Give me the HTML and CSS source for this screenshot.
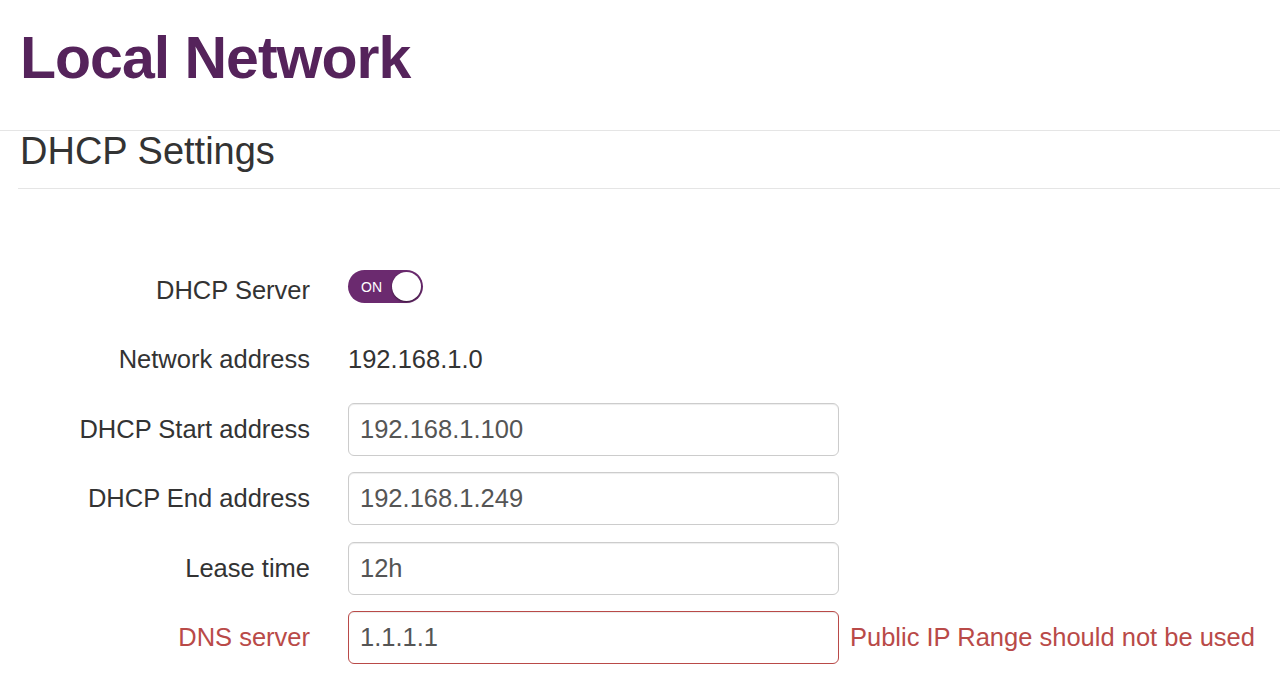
FILE: index.html
```html
<!DOCTYPE html>
<html lang="en">
<head>
  <meta charset="UTF-8" />
  <title>Local Network</title>
  <link rel="stylesheet" href="styles.css">
</head>
<body>
  <h1 class="page-title">Local Network</h1>

  <div class="section">
    <div class="legend">DHCP Settings</div>

    <form class="dhcp-form">
      <div class="form-row">
        <label class="row-label">DHCP Server</label>
        <div class="row-control">
          <span class="toggle">
            <span class="toggle-text">ON</span>
            <span class="toggle-knob"></span>
          </span>
        </div>
      </div>

      <div class="form-row">
        <label class="row-label">Network address</label>
        <div class="row-control static-value">192.168.1.0</div>
      </div>

      <div class="form-row">
        <label class="row-label" for="dhcp-start">DHCP Start address</label>
        <div class="row-control">
          <input type="text" id="dhcp-start" value="192.168.1.100" />
        </div>
      </div>

      <div class="form-row">
        <label class="row-label" for="dhcp-end">DHCP End address</label>
        <div class="row-control">
          <input type="text" id="dhcp-end" value="192.168.1.249" />
        </div>
      </div>

      <div class="form-row">
        <label class="row-label" for="lease">Lease time</label>
        <div class="row-control">
          <input type="text" id="lease" value="12h" />
        </div>
      </div>

      <div class="form-row has-error">
        <label class="row-label" for="dns">DNS server</label>
        <div class="row-control">
          <input type="text" id="dns" value="1.1.1.1" />
        </div>
        <span class="help-text">Public IP Range should not be used</span>
      </div>
    </form>
  </div>
</body>
</html>
```

FILE: styles.css
```css
* {
  box-sizing: border-box;
}
body {
  margin: 0;
  font-family: 'Liberation Sans', Arial, sans-serif;
  color: #333;
  background-color: #fff;
}

.page-title {
  margin: 25px 0 39px;
  padding-left: 20px;
  font-size: 59px;
  line-height: 66px;
  font-weight: bold;
  letter-spacing: -1px;
  color: #55235b;
}

.section {
  border-top: 1px solid #e5e5e5;
}

.legend {
  margin-left: 18px;
  padding: 1px 0 18px 2px;
  font-size: 38px;
  line-height: 38px;
  color: #333;
  border-bottom: 1px solid #e5e5e5;
}

.dhcp-form {
  margin-top: 74.5px;
}

.form-row {
  display: flex;
  align-items: center;
  height: 53px;
  margin-bottom: 16.5px;
}

.row-label {
  width: 310px;
  text-align: right;
  font-size: 25.5px;
  color: #333;
}

.row-control {
  margin-left: 38px;
  width: 491px;
}

.static-value {
  font-size: 25.5px;
  color: #333;
}

input[type="text"] {
  width: 100%;
  height: 53px;
  padding: 0 11px;
  font-family: inherit;
  font-size: 25.5px;
  color: #555;
  border: 1px solid #ccc;
  border-radius: 6px;
  box-shadow: inset 0 1px 1px rgba(0, 0, 0, 0.075);
  outline: none;
}

/* 토글 스위치 */
.toggle {
  display: flex;
  align-items: center;
  justify-content: space-between;
  width: 75px;
  height: 33px;
  margin-bottom: 7px;
  padding: 0 2px 0 13px;
  border-radius: 17px;
  background-color: #6b2a6f;
}
.toggle-text {
  font-size: 14px;
  color: #fff;
}
.toggle-knob {
  width: 29px;
  height: 29px;
  border-radius: 50%;
  background-color: #fff;
  box-shadow: 0 1px 2px rgba(0, 0, 0, 0.5);
}

.has-error .row-label,
.has-error .help-text {
  color: #b94a48;
}
.has-error input[type="text"] {
  border: 1.5px solid #b94a48;
}
.help-text {
  margin-left: 11px;
  font-size: 25.5px;
  white-space: nowrap;
}
```
